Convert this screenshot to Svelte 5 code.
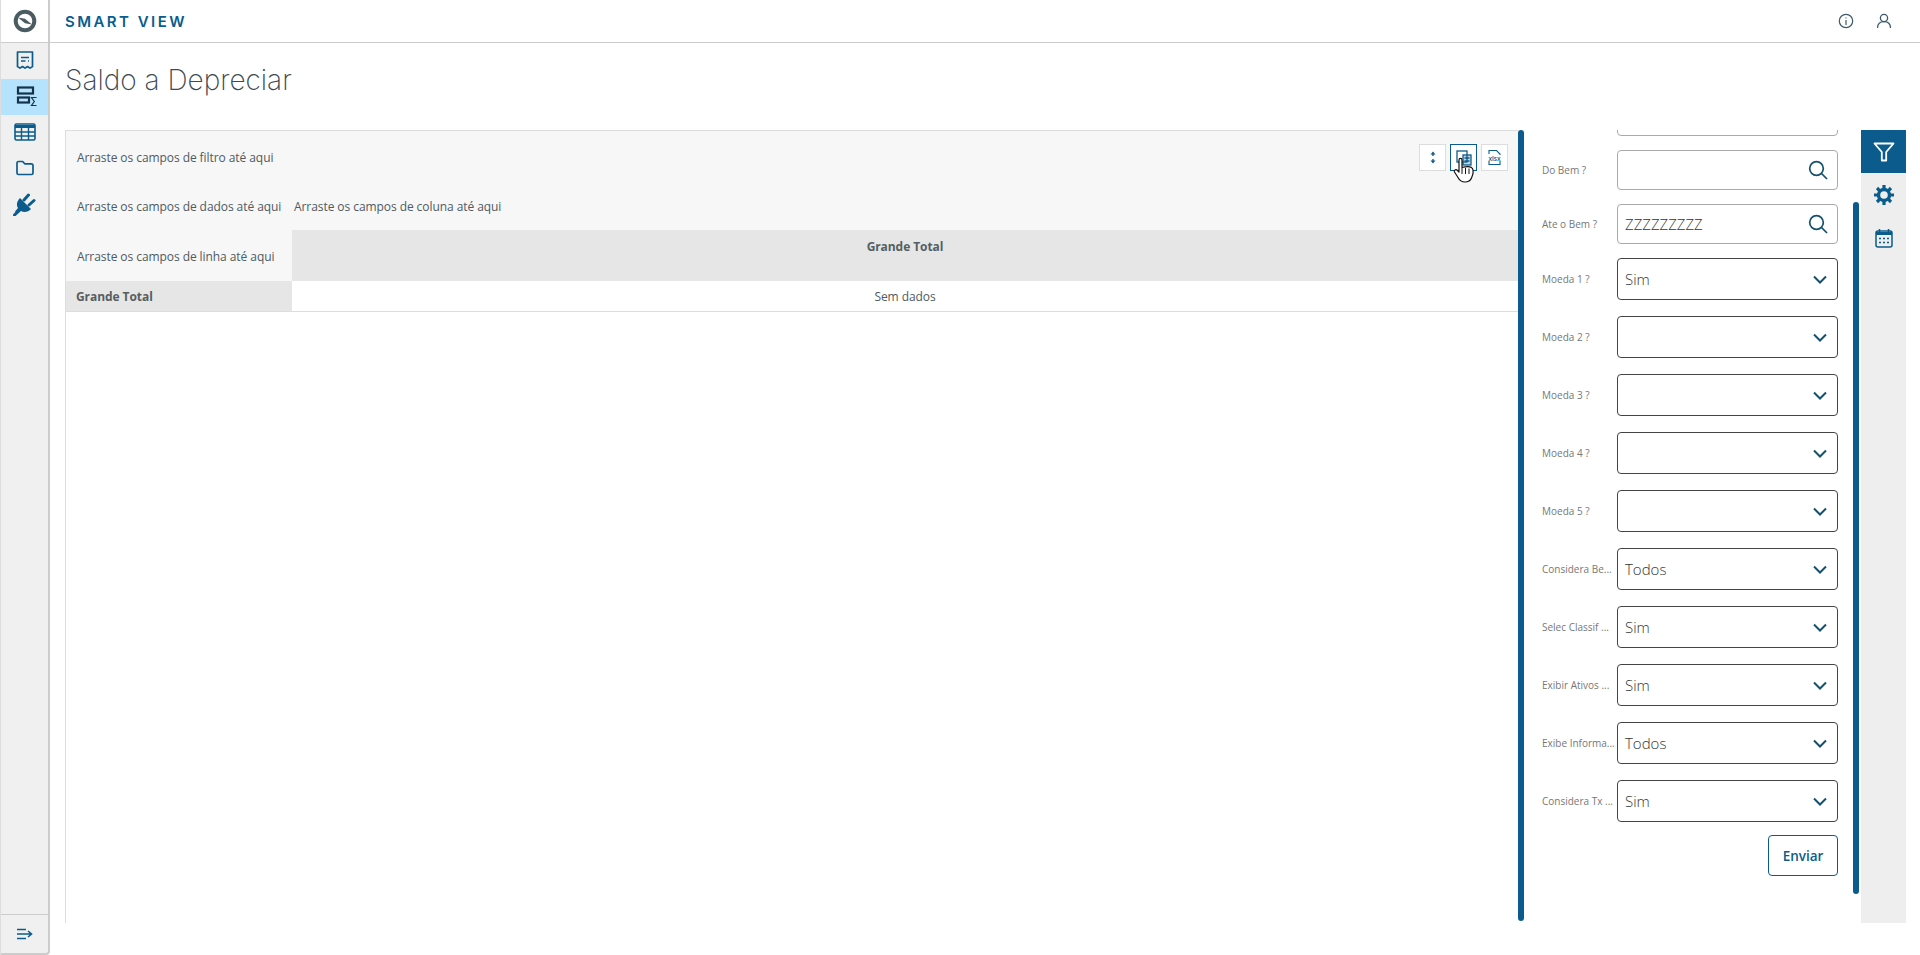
<script>
	const navItems = [
		{ id: 'receipt' },
		{ id: 'sum', active: true },
		{ id: 'table' },
		{ id: 'folder' },
		{ id: 'plug' }
	];

	const fields = [
		{ label: '', kind: 'search', value: '' },
		{ label: 'Do Bem ?', kind: 'search', value: '' },
		{ label: 'Ate o Bem ?', kind: 'search', value: 'ZZZZZZZZZ' },
		{ label: 'Moeda 1 ?', kind: 'select', value: 'Sim' },
		{ label: 'Moeda 2 ?', kind: 'select', value: '' },
		{ label: 'Moeda 3 ?', kind: 'select', value: '' },
		{ label: 'Moeda 4 ?', kind: 'select', value: '' },
		{ label: 'Moeda 5 ?', kind: 'select', value: '' },
		{ label: 'Considera Be...', kind: 'select', value: 'Todos' },
		{ label: 'Selec Classif ...', kind: 'select', value: 'Sim' },
		{ label: 'Exibir Ativos ...', kind: 'select', value: 'Sim' },
		{ label: 'Exibe Informa...', kind: 'select', value: 'Todos' },
		{ label: 'Considera Tx ...', kind: 'select', value: 'Sim' }
	];
</script>

<div class="shell">
	<aside class="sidebar">
		<div class="logo">
			<svg width="24" height="24" viewBox="0 0 24 24" fill="none">
				<circle cx="12" cy="12" r="9.3" stroke="#4a5c62" stroke-width="4" />
				<path d="M5 8.500 L12 9.800 L19 15.500 L12 14.200 Z" fill="#4a5c62" />
			</svg>
		</div>
		<nav class="nav">
			{#each navItems as item}
				<div class="nav-item" class:active={item.active}>
					{#if item.id === 'receipt'}
						<svg width="20" height="20" viewBox="0 0 20 20" fill="none" stroke="#0b5c8c" stroke-width="1.7">
							<path d="M2.500 2h15v14.500l-2.500 1.600-2.500-1.600-2.500 1.600-2.500-1.600-2.500 1.600-2.500-1.600z" stroke-linejoin="round" />
							<path d="M6 7.500h8M6 11h4.500M13 11h1" />
						</svg>
					{:else if item.id === 'sum'}
						<svg width="24" height="22" viewBox="0 0 24 22" fill="none">
							<rect x="5" y="2.500" width="15" height="6" stroke="#14324a" stroke-width="2.200" />
							<rect x="5" y="12.500" width="11" height="5" stroke="#14324a" stroke-width="2.200" />
							<path d="M23.500 12.500h-5l2.800 4-2.800 4h5" stroke="#14324a" stroke-width="1.200" />
						</svg>
					{:else if item.id === 'table'}
						<svg width="22" height="18" viewBox="0 0 22 18" fill="none" stroke="#0b5c8c">
							<rect x="1" y="1" width="20" height="16" rx="1.500" stroke-width="1.600" />
							<path d="M1 3.500h20" stroke-width="3" />
							<path d="M1 9h20M1 13h20M7.500 4v13M14.500 4v13" stroke-width="1.400" />
						</svg>
					{:else if item.id === 'folder'}
						<svg width="18" height="16" viewBox="0 0 18 16" fill="none" stroke="#0b5c8c" stroke-width="1.700">
							<path d="M1 3a1.500 1.500 0 0 1 1.500-1.500h4.200l2 2.300h6.800A1.500 1.500 0 0 1 17 5.300V13a1.500 1.500 0 0 1-1.500 1.500h-13A1.500 1.500 0 0 1 1 13z" stroke-linejoin="round" />
						</svg>
					{:else}
						<svg width="23" height="23" viewBox="0 0 23 23">
							<path d="M7 5 18 16C15.500 19 11 20 8 18L4.500 21 2 18.500 5 15C3 12 4 8 7 5z" fill="#0b5c8c" />
							<path d="M1.500 22l4-4M11 7l4.500-5M16 12l5-4.500" fill="none" stroke="#0b5c8c" stroke-width="3" stroke-linecap="round" />
						</svg>
					{/if}
				</div>
			{/each}
		</nav>
		<div class="collapse">
			<svg width="16" height="12" viewBox="0 0 16 12" fill="none" stroke="#0b5c8c" stroke-width="1.600">
				<path d="M0 1.500h9M0 6h14M0 10.500h9M11 3l3.500 3-3.500 3" />
			</svg>
		</div>
	</aside>

	<div class="main">
		<header class="topbar">
			<span class="brand">SMART VIEW</span>
			<div class="top-icons">
				<svg width="16" height="16" viewBox="0 0 16 16" fill="none" stroke="#3d5a6c" stroke-width="1.200">
					<circle cx="8" cy="8" r="6.700" />
					<path d="M8 4.500v1M8 7v5" />
				</svg>
				<svg width="16" height="16" viewBox="0 0 16 16" fill="none" stroke="#3d5a6c" stroke-width="1.300">
					<circle cx="8" cy="5" r="3.600" />
					<path d="M1.500 15c0-4 2.500-6.400 6.500-6.400s6.500 2.400 6.500 6.400" />
				</svg>
			</div>
		</header>

		<h1 class="title">Saldo a Depreciar</h1>

		<div class="content">
			<section class="pivot">
				<div class="pivot-grid">
					<div class="zone filter-zone">
						<span>Arraste os campos de filtro até aqui</span>
						<div class="tools">
							<button class="tool" aria-label="Expandir">
								<svg width="8" height="13" viewBox="0 0 8 13" fill="none" stroke="#14324a" stroke-width="1.200">
									<path d="M4 2v3M4 8v3" />
									<path d="M1.500 3.500 4 .5l2.500 3zM1.500 9.500 4 12.500l2.500-3z" fill="#0b5c8c" stroke="none" />
								</svg>
							</button>
							<button class="tool hovered" aria-label="Copiar">
								<svg width="16" height="16" viewBox="0 0 16 16" fill="none" stroke="#0b5c8c" stroke-width="1.300">
									<rect x="1" y="1" width="10" height="11" />
									<rect x="7" y="5" width="8" height="10" fill="#0b5c8c" fill-opacity=".25" />
									<path d="M8.500 8h5M8.500 11h5" />
								</svg>
							</button>
							<button class="tool" aria-label="Exportar xlsx">
								<svg width="17" height="17" viewBox="0 0 17 17" fill="none" stroke="#0b5c8c" stroke-width="1.100">
									<path d="M3 5V1.500h7.500L14 5v1M14 12v3.500H3V12" />
									<text x="8.500" y="11.500" text-anchor="middle" class="xlsx">xlsx</text>
								</svg>
							</button>
						</div>
					</div>
					<div class="zone zone-data">Arraste os campos de dados até aqui</div>
					<div class="zone zone-data zone-col">Arraste os campos de coluna até aqui</div>
					<div class="zone zone-line">Arraste os campos de linha até aqui</div>
					<div class="col-head">Grande Total</div>
					<div class="row-head">Grande Total</div>
					<div class="cell">Sem dados</div>
				</div>
				<svg class="cursor" width="24" height="28" viewBox="0 0 24 28">
					<path d="M6 3c0-2.200 3-2.200 3 0v7.500c2.500-.6 9-1.600 10.500 1 1 2 .5 6-1 9.500-.8 2-3 4-6.500 4s-5.500-1.500-7-4.500L1.500 15c-.8-1.500 1.200-3.500 3-1.500L6 15z" fill="#fff" stroke="#111" stroke-width="1.200" stroke-linejoin="round" />
					<path d="M9 11v6M12.500 11v6M16 11.500V17" stroke="#111" stroke-width="1" />
				</svg>
			</section>
			<div class="thumb"></div>

			<form class="form">
				<div class="form-inner">
					{#each fields as field}
						<div class="field" class:is-select={field.kind === 'select'}>
							<span class="label">{field.label}</span>
							<div class="control">
								<span class="value">{field.value}</span>
								{#if field.kind === 'search'}
									<svg width="20" height="20" viewBox="0 0 20 20" fill="none" stroke="#14506f" stroke-width="1.700">
										<circle cx="8.500" cy="8.500" r="6.800" />
										<path d="M13.500 13.500l5.500 5.500" />
									</svg>
								{:else}
									<svg width="14" height="9" viewBox="0 0 14 9" fill="none" stroke="#14506f" stroke-width="2">
										<path d="M1 1.500l6 6 6-6" />
									</svg>
								{/if}
							</div>
						</div>
					{/each}
					<div class="actions">
						<button type="button" class="send">Enviar</button>
					</div>
				</div>
			</form>
			<div class="thumb inner"></div>

			<div class="rail">
				<div class="rail-item active">
					<svg width="22" height="20" viewBox="0 0 22 20" fill="none" stroke="#fff" stroke-width="1.800">
						<path d="M1.500 1.500h19l-7.300 8.500v8.500h-4.400V10z" stroke-linejoin="round" />
					</svg>
				</div>
				<div class="rail-item">
					<svg width="20" height="20" viewBox="0 0 20 20">
						<circle cx="10" cy="10" r="5.500" fill="none" stroke="#0b5c8c" stroke-width="3.400" />
						<path d="M10 0v4M10 16v4M0 10h4M16 10h4M3 3l2.800 2.800M14.200 14.200 17 17M3 17l2.800-2.800M14.200 5.800 17 3" stroke="#0b5c8c" stroke-width="3.200" />
					</svg>
				</div>
				<div class="rail-item">
					<svg width="18" height="20" viewBox="0 0 18 20" fill="none" stroke="#0b5c8c">
						<rect x="1" y="3" width="16" height="16" rx="2" stroke-width="1.500" />
						<path d="M1 5.500h16" stroke-width="3" />
						<path d="M4.500 1v3M13.500 1v3" stroke-width="1.500" />
						<path d="M4 10.500h10M4 14.500h10" stroke-width="1.500" stroke-dasharray="2 2" />
					</svg>
				</div>
			</div>
		</div>
	</div>
</div>

<style>
	:global(body) {
		margin: 0;
		background: #fff;
		font-family: 'Open Sans', 'Liberation Sans', sans-serif;
	}

	.shell {
		display: flex;
		height: 955px;
		overflow: hidden;
	}

	.sidebar {
		box-sizing: border-box;
		width: 50px;
		height: 955px;
		flex-shrink: 0;
		display: flex;
		flex-direction: column;
		background: #f0f0f0;
		border-left: 1px solid #ddd;
		border-right: 2px solid #ccc;
		border-bottom: 2px solid #ccc;
		border-bottom-right-radius: 4px;
	}

	.logo {
		height: 42px;
		display: flex;
		align-items: center;
		justify-content: center;
		background: #fff;
		border-bottom: 1px solid #ccc;
		flex-shrink: 0;
	}

	.nav {
		flex: 1;
	}

	.nav-item {
		box-sizing: border-box;
		height: 36px;
		padding-bottom: 2px;
		display: flex;
		align-items: center;
		justify-content: center;
	}

	.nav-item.active {
		background: #b5e3fd;
	}

	.collapse {
		height: 38px;
		display: flex;
		align-items: center;
		justify-content: center;
		border-top: 1px solid #ccc;
	}

	.main {
		flex: 1;
		min-width: 0;
		display: flex;
		flex-direction: column;
	}

	.topbar {
		box-sizing: border-box;
		height: 43px;
		display: flex;
		align-items: center;
		justify-content: space-between;
		padding: 0 28px 0 15px;
		border-bottom: 1px solid #ccc;
	}

	.brand {
		font-family: Inter, sans-serif;
		font-size: 15px;
		font-weight: 600;
		letter-spacing: 2.45px;
		color: #0b5c8c;
	}

	.top-icons {
		display: flex;
		gap: 22px;
	}

	.title {
		box-sizing: border-box;
		height: 87px;
		margin: 0;
		padding: 16px 0 0 15px;
		font-family: Inter, sans-serif;
		font-size: 28px;
		line-height: 42px;
		font-weight: 200;
		color: #3c4a52;
	}

	.content {
		display: flex;
		height: 793px;
		padding: 0 14px 0 15px;
	}

	.pivot {
		position: relative;
		flex: 1;
		min-width: 0;
		box-sizing: border-box;
		border-left: 1px solid #ddd;
		border-top: 1px solid #ddd;
	}

	.pivot-grid {
		display: grid;
		grid-template-columns: 226px 1fr;
		grid-template-rows: 53px 46px 51px 30px;
		font-size: 12px;
		letter-spacing: -0.07px;
		color: #4f5a61;
		border-bottom: 1px solid #ddd;
	}

	.zone {
		display: flex;
		align-items: center;
		padding-left: 11px;
		background: #f7f7f7;
		white-space: nowrap;
	}

	.zone-data {
		padding-bottom: 1px;
	}

	.zone-line {
		padding-top: 2px;
	}

	.filter-zone {
		grid-column: 1 / 3;
		justify-content: space-between;
		padding-right: 10px;
	}

	.zone-col {
		padding-left: 2px;
	}

	.tools {
		display: flex;
		gap: 4px;
	}

	.tool {
		box-sizing: border-box;
		width: 27px;
		height: 27px;
		padding: 0;
		display: flex;
		align-items: center;
		justify-content: center;
		background: #fff;
		border: 1px solid #ddd;
	}

	.tool.hovered {
		border: 1px solid #0b5c8c;
	}

	.xlsx {
		font-family: 'Open Sans', sans-serif;
		font-size: 6.500px;
		font-weight: 600;
		fill: #0b5c8c;
		stroke: none;
	}

	.col-head {
		background: #e6e6e6;
		text-align: center;
		font-weight: 700;
		padding-top: 8px;
		color: #555e63;
	}

	.row-head {
		display: flex;
		align-items: center;
		padding-left: 10px;
		background: #e6e6e6;
		font-weight: 700;
		color: #555e63;
	}

	.cell {
		display: flex;
		align-items: center;
		justify-content: center;
	}

	.cursor {
		position: absolute;
		left: 1387px;
		top: 26px;
	}

	.thumb {
		width: 6px;
		height: 791px;
		flex-shrink: 0;
		border-radius: 3px;
		background: #0b5c8c;
	}

	.thumb.inner {
		height: 692px;
		margin: 72px 2px 0 0;
	}

	.form {
		box-sizing: border-box;
		width: 329px;
		flex-shrink: 0;
		height: 793px;
		overflow: hidden;
		padding: 0 15px 0 18px;
	}

	.form-inner {
		margin-top: -34px;
	}

	.field {
		display: flex;
		align-items: center;
		height: 40px;
		margin-bottom: 14px;
	}

	.field.is-select {
		height: 42px;
		margin-bottom: 16px;
	}

	.label {
		width: 75px;
		flex-shrink: 0;
		font-size: 10px;
		color: #777;
		white-space: nowrap;
		overflow: hidden;
	}

	.control {
		box-sizing: border-box;
		flex: 1;
		height: 100%;
		display: flex;
		align-items: center;
		justify-content: space-between;
		padding: 0 9px 0 7px;
		border: 1px solid #aaa;
		border-radius: 4px;
	}

	.is-select .control {
		border-color: #444;
		padding-right: 10px;
	}

	.value {
		font-size: 15px;
		font-weight: 300;
		color: #333;
	}

	.actions {
		display: flex;
		justify-content: flex-end;
		margin-top: -3px;
	}

	.send {
		box-sizing: border-box;
		width: 70px;
		height: 41px;
		background: #fff;
		border: 1px solid #0b5c8c;
		border-radius: 4px;
		font-family: inherit;
		font-size: 13.500px;
		font-weight: 600;
		color: #0b5c8c;
	}

	.rail {
		width: 45px;
		flex-shrink: 0;
		background: #eee;
	}

	.rail-item {
		height: 43px;
		display: flex;
		align-items: center;
		justify-content: center;
	}

	.rail-item.active {
		background: #0b5c8c;
	}
</style>
